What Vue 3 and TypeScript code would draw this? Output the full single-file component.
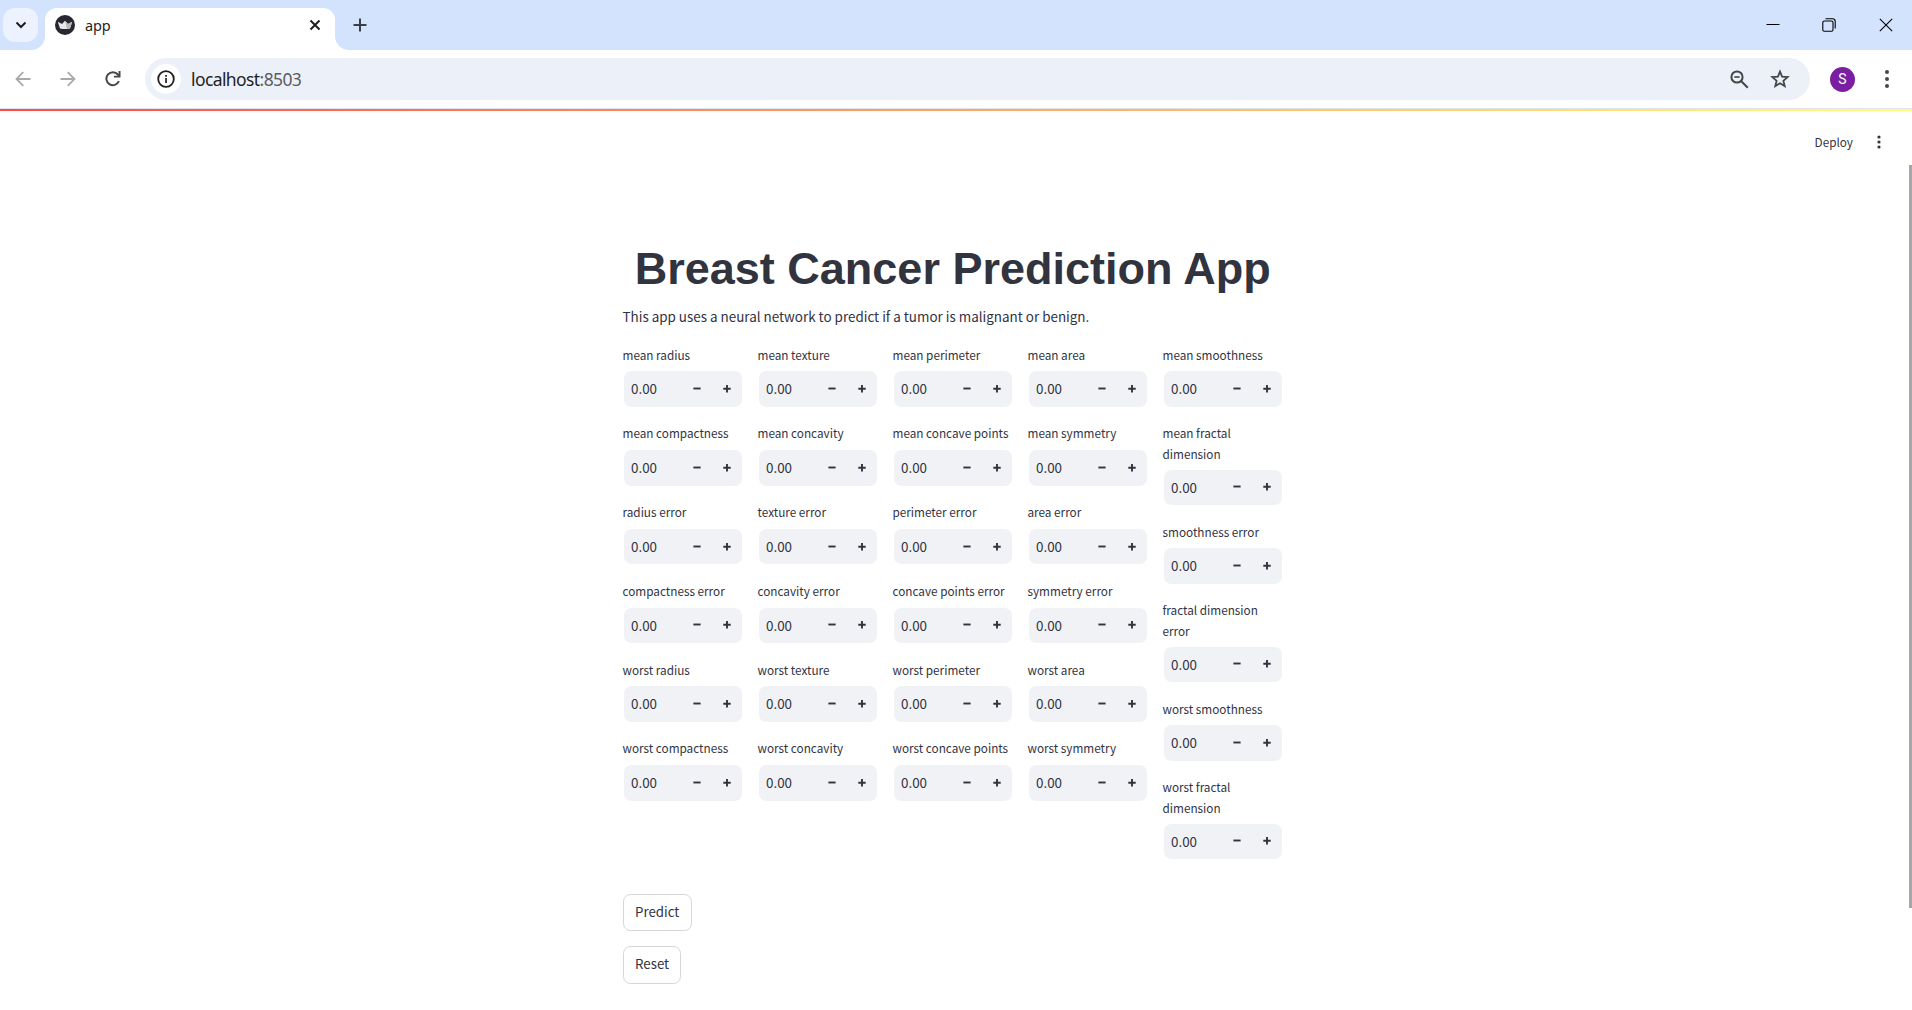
<script setup lang="ts">
import { ref } from 'vue'

interface Field {
  name: string
  value: number
}

const names: string[][] = [
  ['mean radius', 'mean compactness', 'radius error', 'compactness error', 'worst radius', 'worst compactness'],
  ['mean texture', 'mean concavity', 'texture error', 'concavity error', 'worst texture', 'worst concavity'],
  ['mean perimeter', 'mean concave points', 'perimeter error', 'concave points error', 'worst perimeter', 'worst concave points'],
  ['mean area', 'mean symmetry', 'area error', 'symmetry error', 'worst area', 'worst symmetry'],
  ['mean smoothness', 'mean fractal dimension', 'smoothness error', 'fractal dimension error', 'worst smoothness', 'worst fractal dimension'],
]

const build = (): Field[][] => names.map((col) => col.map((name) => ({ name, value: 0 })))
const columns = ref<Field[][]>(build())

function step(field: Field, delta: number) {
  field.value = Math.round((field.value + delta) * 100) / 100
}
function reset() {
  columns.value = build()
}
</script>

<template>
  <div class="window">
    <div class="tabstrip">
      <div class="tab-search">
        <svg width="12" height="8" viewBox="0 0 12 8"><path d="M1.5 1.5 6 6l4.5-4.5" fill="none" stroke="#1f1f1f" stroke-width="2" /></svg>
      </div>
      <div class="tab">
        <svg class="favicon" width="20" height="20" viewBox="0 0 20 20">
          <circle cx="10" cy="10" r="10" fill="#262730" />
          <path d="M2.800 6.800 7 9 10 5.800l3 3.200 4.200-2.200-2.200 6.600q-5 1.200-10 0z" fill="#e8e8e8" />
          <path d="M10 5.800l3 3.200 4.200-2.200-2.200 6.600-3 .6z" fill="#b9b9bb" />
        </svg>
        <span class="tab-title">app</span>
        <svg width="12" height="12" viewBox="0 0 12 12"><path d="M1.5 1.5l9 9M10.5 1.5l-9 9" stroke="#1f1f1f" stroke-width="2" /></svg>
      </div>
      <svg class="new-tab" width="14" height="14" viewBox="0 0 14 14"><path d="M7 .5v13M.5 7h13" stroke="#3c3f43" stroke-width="2" /></svg>
      <div class="controls">
        <svg width="14" height="14" viewBox="0 0 14 14"><path d="M.5 6.5h13" stroke="#000" /></svg>
        <svg width="14" height="14" viewBox="0 0 14 14" fill="none" stroke="#000" stroke-width="1.1"><rect x=".8" y="3" width="10.2" height="10.2" rx="1.5" /><path d="M3.5 .8H10.500a2.700 2.700 0 0 1 2.700 2.700V10.500" /></svg>
        <svg class="close" width="14" height="14" viewBox="0 0 14 14"><path d="M.8.8l12.400 12.400M13.200.8.8 13.200" stroke="#000" stroke-width="1.1" /></svg>
      </div>
    </div>

    <div class="toolbar">
      <svg class="back" width="16" height="16" viewBox="0 0 16 16" fill="none" stroke="#a9a9a9" stroke-width="1.8"><path d="M15.500 8H2M8.300 1.200 1.500 8l6.800 6.800" /></svg>
      <svg class="forward" width="16" height="16" viewBox="0 0 16 16" fill="none" stroke="#a9a9a9" stroke-width="1.800"><path d="M.5 8H14M7.700 1.200 14.500 8l-6.800 6.800" /></svg>
      <svg class="reload" width="16" height="16" viewBox="0 0 16 16"><path d="M13.900 10.200A6.500 6.500 0 1 1 12.900 3.500L14.300 5" fill="none" stroke="#444746" stroke-width="2" /><path d="M15.500 0v6.600H8.900V4.700h4.700V0z" fill="#444746" /></svg>
      <div class="omnibox">
        <div class="site-info">
          <svg width="18" height="18" viewBox="0 0 18 18"><circle cx="9" cy="9" r="7.800" fill="none" stroke="#1f1f1f" stroke-width="1.800" /><path d="M8.200 8h1.700v5H8.200zM8.200 5h1.700v1.800H8.200z" fill="#1f1f1f" /></svg>
        </div>
        <span class="url">localhost<span class="port">:8503</span></span>
        <svg class="lens" width="19" height="19" viewBox="0 0 19 19" fill="none" stroke="#444746" stroke-width="2"><circle cx="7" cy="7" r="5.600" /><path d="M4.300 7h5.400" stroke-width="1.600" /><path d="M11 11l6.800 6.800" /></svg>
        <svg class="star" width="20" height="20" viewBox="0 0 20 20"><path d="M10 2.600l2.100 5.100 5.500.4-4.200 3.600 1.300 5.400L10 14.200l-4.700 2.900 1.300-5.400-4.200-3.600 5.500-.4z" fill="none" stroke="#444746" stroke-width="1.800" /></svg>
      </div>
      <div class="avatar">S</div>
      <svg class="menu" width="4" height="18" viewBox="0 0 4 18" fill="#444746"><circle cx="2" cy="2" r="2" /><circle cx="2" cy="9" r="2" /><circle cx="2" cy="16" r="2" /></svg>
    </div>

    <div class="decoration"></div>

    <div class="page">
      <header class="app-header">
        <span class="deploy">Deploy</span>
        <svg width="4" height="14" viewBox="0 0 4 14" fill="#31333f"><circle cx="2" cy="2" r="1.600" /><circle cx="2" cy="7" r="1.600" /><circle cx="2" cy="12" r="1.600" /></svg>
      </header>

      <main class="content">
        <h1>Breast Cancer Prediction App</h1>
        <p class="intro">This app uses a neural network to predict if a tumor is malignant or benign.</p>
        <div class="columns">
          <div v-for="(col, i) in columns" :key="i" class="column">
            <div v-for="field in col" :key="field.name" class="field">
              <div class="label">{{ field.name }}</div>
              <div class="input">
                <span class="value">{{ field.value.toFixed(2) }}</span>
                <button class="step" aria-label="Decrease" @click="step(field, -0.01)">
                  <svg width="8" height="8" viewBox="0 0 8 8"><path d="M.4 3.500h7.200" stroke="#31333f" stroke-width="1.900" /></svg>
                </button>
                <button class="step" aria-label="Increase" @click="step(field, 0.01)">
                  <svg width="8" height="8" viewBox="0 0 8 8"><path d="M.3 3.800h7.400M4 .1v7.400" stroke="#31333f" stroke-width="1.900" /></svg>
                </button>
              </div>
            </div>
          </div>
        </div>
        <div class="actions">
          <button class="action">Predict</button>
          <button class="action" @click="reset">Reset</button>
        </div>
      </main>
      <div class="scrollbar"></div>
    </div>
  </div>
</template>

<style>
body {
  margin: 0;
  overflow: hidden;
}
</style>

<style scoped>
.window {
  width: 1912px;
  height: 1010px;
  display: flex;
  flex-direction: column;
  background: #fff;
  color: #31333f;
  font-family: "Noto Sans CJK SC", "Noto Sans", sans-serif;
  overflow: hidden;
}
svg {
  display: block;
  flex: none;
}
button {
  font: inherit;
  color: inherit;
  padding: 0;
  border: 0;
  background: none;
}
.tabstrip {
  flex: none;
  height: 50px;
  box-sizing: border-box;
  padding: 0 19px 0 3px;
  display: flex;
  align-items: center;
  background: #d3e3fd;
}
.tab-search {
  width: 35px;
  height: 34px;
  border-radius: 12px;
  background: #ecf2fe;
  display: flex;
  align-items: center;
  justify-content: center;
}
.tab {
  position: relative;
  align-self: flex-end;
  width: 290px;
  height: 42px;
  margin-left: 7px;
  box-sizing: border-box;
  padding: 0 14px 8px 10px;
  display: flex;
  align-items: center;
  background: #fff;
  border-radius: 12px 12px 0 0;
}
/* flared feet where the active tab meets the toolbar */
.tab::before,
.tab::after {
  content: "";
  position: absolute;
  bottom: 0;
  width: 14px;
  height: 14px;
}
.tab::before {
  left: -14px;
  background: radial-gradient(circle at 0 0, transparent 13.500px, #fff 14.500px);
}
.tab::after {
  right: -14px;
  background: radial-gradient(circle at 100% 0, transparent 13.500px, #fff 14.500px);
}
.tab-title {
  flex: 1;
  margin-left: 10px;
  font: 14.500px/20px "Noto Sans", sans-serif;
  letter-spacing: -0.200px;
  color: #1f1f1f;
}
.new-tab {
  margin-left: 18px;
}
.controls {
  margin-left: auto;
  display: flex;
  gap: 42px;
}
.close {
  margin-left: 1px;
}
.toolbar {
  flex: none;
  height: 59px;
  box-sizing: border-box;
  padding: 0 23px 0 15px;
  display: flex;
  align-items: center;
  border-bottom: 1px solid #dfe3ea;
}
.forward {
  margin-left: 29px;
}
.reload {
  margin-left: 29px;
}
.omnibox {
  flex: 1;
  height: 42px;
  margin-left: 24px;
  box-sizing: border-box;
  padding: 0 20px 0 6px;
  display: flex;
  align-items: center;
  border-radius: 21px;
  background: #ecf0f9;
}
.site-info {
  width: 30px;
  height: 30px;
  border-radius: 50%;
  background: #fff;
  display: flex;
  align-items: center;
  justify-content: center;
}
.url {
  flex: 1;
  margin-left: 10px;
  font: 17.500px/24px "Noto Sans", sans-serif;
  letter-spacing: -0.600px;
  color: #1f1f1f;
}
.port {
  color: #5a5d61;
}
.star {
  margin-left: 21px;
}
.avatar {
  width: 25px;
  height: 25px;
  margin-left: 20px;
  border-radius: 50%;
  background: #7b1fa2;
  color: #fff;
  font: 14px/25px Roboto, sans-serif;
  text-align: center;
}
.menu {
  margin-left: 30px;
}
.decoration {
  flex: none;
  height: 2px;
  background: linear-gradient(90deg, #ff4b4b, #fffd80);
}
.page {
  position: relative;
  flex: 1;
  display: flex;
  flex-direction: column;
}
.app-header {
  height: 53px;
  box-sizing: border-box;
  padding: 9px 31px 0 0;
  display: flex;
  justify-content: flex-end;
  align-items: center;
  gap: 24px;
}
.deploy {
  font-size: 11.750px;
  line-height: 20px;
}
.content {
  width: 660px;
  margin-left: 623px;
  padding-top: 74px;
}
h1 {
  margin: 0 0 0 -0.500px;
  height: 61px;
  font: bold 45px/61px "Liberation Sans", Arial, sans-serif;
  text-align: center;
}
.intro {
  margin: 4.500px 0 0 -0.500px;
  height: 24px;
  font-size: 13.430px;
  line-height: 24px;
  white-space: nowrap;
}
.columns {
  margin-top: 16.500px;
  display: flex;
  gap: 15px;
}
.column {
  width: 120px;
  display: flex;
  flex-direction: column;
  gap: 15px;
}
.label {
  min-height: 22.500px;
  margin: -0.500px 0 3.750px -0.500px;
  padding-bottom: 0.500px;
  font-size: 11.750px;
  line-height: 21px;
}
.input {
  height: 37.500px;
  box-sizing: border-box;
  border: 1px solid #fff;
  border-radius: 8px;
  background: #f0f2f6;
  background-clip: padding-box;
  display: flex;
  align-items: center;
}
.value {
  flex: 1;
  padding: 0 0 1.500px 7px;
  font-size: 13.400px;
  line-height: 22px;
}
.step {
  width: 30px;
  height: 100%;
  display: flex;
  align-items: center;
  justify-content: center;
}
.step svg {
  margin-left: -1px;
}
.actions {
  margin-top: 33.750px;
  display: flex;
  flex-direction: column;
  align-items: flex-start;
  gap: 15px;
}
.action {
  height: 37.500px;
  box-sizing: border-box;
  padding: 0 11.250px 2px 11px;
  border: 1px solid #d6d6d9;
  border-radius: 7.500px;
  background: #fff;
  font-size: 13.300px;
  line-height: 24px;
}
.scrollbar {
  position: absolute;
  top: 54px;
  right: 0;
  width: 3px;
  height: 743px;
  background: #a6a6ab;
}
</style>
